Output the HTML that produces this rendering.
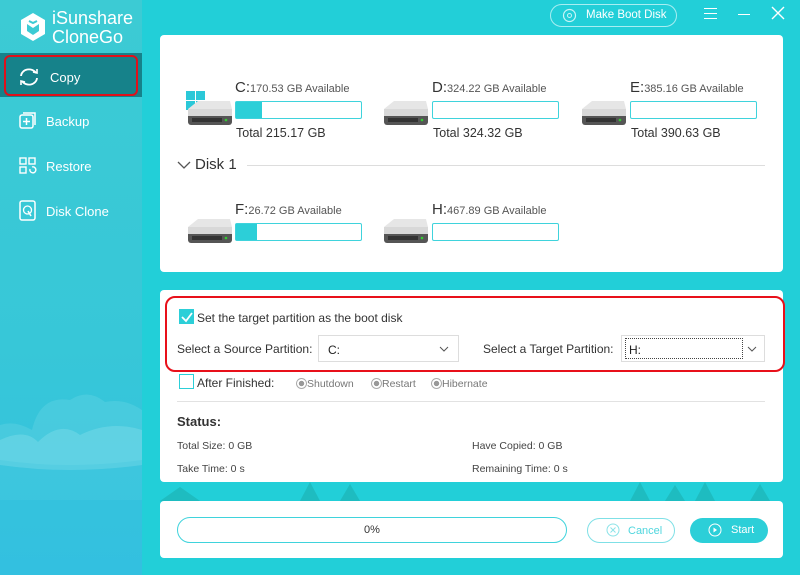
<!DOCTYPE html>
<html><head><meta charset="utf-8"><style>
*{margin:0;padding:0;box-sizing:border-box}
body{width:800px;height:575px;overflow:hidden;font-family:"Liberation Sans",sans-serif;background:#22cfd8;position:relative;color:#222}
.side{position:absolute;left:0;top:0;width:142px;height:575px;background:linear-gradient(#3ccbd4,#37c7d8 60%,#33c0e0)}
.abs{position:absolute}
.nav{position:absolute;left:18px;color:#fff;font-size:13px;display:flex;align-items:center;gap:8px}
.card{position:absolute;background:#fff;border-radius:4px}
.drive{position:absolute;width:46px;height:28px}
.lbl{position:absolute;font-size:11px;color:#555}
.lbl b{font-weight:normal;font-size:15px;color:#333}
.bar{position:absolute;width:127px;height:18px;border:1.5px solid #3fd3dc;border-radius:2px}
.bar i{position:absolute;left:0;top:0;bottom:0;background:#2ccfd8}
.tot{position:absolute;font-size:12.5px;color:#333}
.sm{font-size:10.5px;color:#444;position:absolute}
</style></head><body>
<div class="side">
 <svg class="abs" style="left:20px;top:12px" width="26" height="30" viewBox="0 0 26 30"><path d="M13 1L25 8V22L13 29L1 22V8Z" fill="#fff"/><path d="M7 12L13 16L19 12V19L13 23L7 19Z" fill="#3ccbd4"/><path d="M9 9L13 11L17 9" stroke="#3ccbd4" stroke-width="2" fill="none"/></svg>
 <div class="abs" style="left:52px;top:9px;color:#fff;font-size:18px;line-height:19px">iSunshare<br>CloneGo</div>
 <div class="abs" style="left:0;top:53px;width:142px;height:44px;background:#16828a"></div>
 <div class="abs" style="left:4px;top:55px;width:134px;height:41px;border:2.5px solid #e0101a;border-radius:6px"></div>
 <div class="nav" style="top:67px"><svg width="22" height="20" viewBox="0 0 22 20"><path d="M3 9A8 7 0 0 1 18 6M19 11A8 7 0 0 1 4 14" stroke="#fff" stroke-width="1.8" fill="none"/><path d="M15 5L19 6L19 2" stroke="#fff" stroke-width="1.6" fill="none"/><path d="M7 15L3 14L3 18" stroke="#fff" stroke-width="1.6" fill="none"/></svg><span style="margin-left:2px">Copy</span></div>
 <div class="nav" style="top:111px"><svg width="20" height="20" viewBox="0 0 20 20"><rect x="2" y="4" width="13" height="13" rx="2" stroke="#fff" stroke-width="1.5" fill="none"/><path d="M5 2H17V14M8.5 7V14M5 10.5H12" stroke="#fff" stroke-width="1.5" fill="none"/></svg><span>Backup</span></div>
 <div class="nav" style="top:156px"><svg width="20" height="20" viewBox="0 0 20 20"><rect x="2" y="2" width="6" height="6" stroke="#fff" stroke-width="1.4" fill="none"/><rect x="11" y="2" width="6" height="6" stroke="#fff" stroke-width="1.4" fill="none"/><rect x="2" y="11" width="6" height="6" stroke="#fff" stroke-width="1.4" fill="none"/><path d="M12 13A3 3 0 1 0 14 11" stroke="#fff" stroke-width="1.4" fill="none"/></svg><span>Restore</span></div>
 <div class="nav" style="top:200px"><svg width="20" height="22" viewBox="0 0 20 22"><rect x="2" y="1" width="15" height="19" rx="2" stroke="#fff" stroke-width="1.5" fill="none"/><circle cx="9.5" cy="10" r="4" stroke="#fff" stroke-width="1.3" fill="none"/><path d="M10 11L13 16" stroke="#fff" stroke-width="1.5"/></svg><span>Disk Clone</span></div>
 <svg class="abs" style="left:0;top:390px" width="142" height="110" viewBox="0 0 142 110"><path d="M0 35Q15 30 32 40Q40 5 70 10Q88 -2 105 12Q125 8 142 20V70Q70 80 0 70Z" fill="#6ad8e4" opacity=".35"/><path d="M0 50Q25 38 38 52Q60 30 80 45Q110 30 142 40V75Q70 85 0 75Z" fill="#8ee2ee" opacity=".35"/><rect x="0" y="70" width="142" height="40" fill="#5fd3e4" opacity=".2"/></svg>
</div>
<div class="abs" style="left:550px;top:4px;width:127px;height:23px;border:1.5px solid #a8eef2;border-radius:12px;color:#fff;font-size:11.5px;padding:4px 0 0 35px">Make Boot Disk</div>
<svg class="abs" style="left:562px;top:8px" width="15" height="15"><circle cx="7.5" cy="7.5" r="6" stroke="#c8f4f6" stroke-width="1.2" fill="none"/><circle cx="7.5" cy="7.5" r="2" stroke="#c8f4f6" fill="none"/></svg>
<div class="abs" style="left:704px;top:8px;width:13px;height:11px;border-top:1.3px solid #fff;border-bottom:1.3px solid #fff"></div>
<div class="abs" style="left:704px;top:13px;width:13px;height:1.3px;background:#fff"></div>
<div class="abs" style="left:738px;top:14px;width:12px;height:1.3px;background:#fff"></div>
<svg class="abs" style="left:771px;top:6px" width="14" height="14"><path d="M1 1L13 13M13 1L1 13" stroke="#fff" stroke-width="1.4"/></svg>

<div class="card" style="left:160px;top:35px;width:623px;height:237px"></div>
<svg class="abs" style="left:186px;top:91px" width="20" height="20"><rect x="0" y="0" width="9" height="9" fill="#2bc8d8"/><rect x="10" y="0" width="9" height="9" fill="#2bc8d8"/><rect x="0" y="10" width="9" height="9" fill="#2bc8d8"/><rect x="10" y="10" width="9" height="9" fill="#2bc8d8"/></svg>
<svg width="0" height="0" style="position:absolute"><defs><g id="d"><path d="M2 10L12 2H44L46 10Z" fill="#e6e6e6"/><rect x="2" y="10" width="44" height="16" rx="3" fill="#555"/><rect x="2" y="10" width="44" height="7" fill="#d8d8d8"/><rect x="6" y="19" width="30" height="4" fill="#333"/><circle cx="40" cy="21" r="1.3" fill="#3c3"/></g></defs></svg>
<svg class="drive" style="left:186px;top:99px"><use href="#d"/></svg>
<svg class="drive" style="left:382px;top:99px"><use href="#d"/></svg>
<svg class="drive" style="left:580px;top:99px"><use href="#d"/></svg>
<svg class="drive" style="left:186px;top:217px"><use href="#d"/></svg>
<svg class="drive" style="left:382px;top:217px"><use href="#d"/></svg>

<div class="lbl" style="left:235px;top:79px"><b>C:</b>170.53 GB Available</div>
<div class="bar" style="left:235px;top:101px"><i style="width:26px"></i></div>
<div class="tot" style="left:236px;top:126px">Total 215.17 GB</div>
<div class="lbl" style="left:432px;top:79px"><b>D:</b>324.22 GB Available</div>
<div class="bar" style="left:432px;top:101px"></div>
<div class="tot" style="left:433px;top:126px">Total 324.32 GB</div>
<div class="lbl" style="left:630px;top:79px"><b>E:</b>385.16 GB Available</div>
<div class="bar" style="left:630px;top:101px"></div>
<div class="tot" style="left:631px;top:126px">Total 390.63 GB</div>

<svg class="abs" style="left:177px;top:160px" width="14" height="10"><path d="M1 2L7 8L13 2" stroke="#555" stroke-width="1.3" fill="none"/></svg>
<div class="abs" style="left:195px;top:156px;font-size:15px;color:#333">Disk 1</div>
<div class="abs" style="left:247px;top:165px;width:518px;height:1px;background:#ddd"></div>

<div class="lbl" style="left:235px;top:201px"><b>F:</b>26.72 GB Available</div>
<div class="bar" style="left:235px;top:223px"><i style="width:21px"></i></div>
<div class="lbl" style="left:432px;top:201px"><b>H:</b>467.89 GB Available</div>
<div class="bar" style="left:432px;top:223px"></div>

<div class="card" style="left:160px;top:290px;width:623px;height:192px"></div>
<div class="abs" style="left:165px;top:296px;width:620px;height:76px;border:2.5px solid #e8101a;border-radius:10px"></div>
<div class="abs" style="left:179px;top:309px;width:15px;height:15px;background:#2ccfd8"></div>
<svg class="abs" style="left:180px;top:310px" width="14" height="14"><path d="M2 7L6 11L12 3" stroke="#fff" stroke-width="1.8" fill="none"/></svg>
<div class="abs" style="left:197px;top:311px;font-size:12px;color:#333">Set the target partition as the boot disk</div>
<div class="abs" style="left:177px;top:342px;font-size:12px;color:#333">Select a Source Partition:</div>
<div class="abs" style="left:318px;top:335px;width:141px;height:27px;border:1px solid #ddd;font-size:12px;padding:7px 0 0 9px">C:</div>
<svg class="abs" style="left:439px;top:346px" width="10" height="6"><path d="M1 1L5 5L9 1" stroke="#555" fill="none"/></svg>
<div class="abs" style="left:483px;top:342px;font-size:12px;color:#333">Select a Target Partition:</div>
<div class="abs" style="left:621px;top:335px;width:144px;height:27px;border:1px solid #ddd"></div>
<div class="abs" style="left:625px;top:338px;width:118px;height:21px;border:1px dotted #444;font-size:12px;padding:4px 0 0 3px">H:</div>
<svg class="abs" style="left:747px;top:346px" width="10" height="6"><path d="M1 1L5 5L9 1" stroke="#555" fill="none"/></svg>

<div class="abs" style="left:179px;top:374px;width:15px;height:15px;border:1.3px solid #2ccfd8"></div>
<div class="abs" style="left:197px;top:376px;font-size:12px;color:#333">After Finished:</div>
<div class="sm" style="left:296px;top:378px;color:#777"><span style="display:inline-block;width:11px;height:11px;border-radius:50%;border:1px solid #aaa;background:radial-gradient(#999 40%,#fff 45%);vertical-align:-2px"></span>Shutdown</div>
<div class="sm" style="left:371px;top:378px;color:#777"><span style="display:inline-block;width:11px;height:11px;border-radius:50%;border:1px solid #aaa;background:radial-gradient(#999 40%,#fff 45%);vertical-align:-2px"></span>Restart</div>
<div class="sm" style="left:431px;top:378px;color:#777"><span style="display:inline-block;width:11px;height:11px;border-radius:50%;border:1px solid #aaa;background:radial-gradient(#999 40%,#fff 45%);vertical-align:-2px"></span>Hibernate</div>
<div class="abs" style="left:177px;top:401px;width:588px;height:1px;background:#e2e2e2"></div>
<div class="abs" style="left:177px;top:414px;font-size:13px;font-weight:bold;color:#333">Status:</div>
<div class="sm" style="left:177px;top:440px">Total Size: 0 GB</div>
<div class="sm" style="left:472px;top:440px">Have Copied: 0 GB</div>
<div class="sm" style="left:177px;top:463px">Take Time: 0 s</div>
<div class="sm" style="left:472px;top:463px">Remaining Time: 0 s</div>

<svg class="abs" style="left:160px;top:482px" width="623" height="19"><path d="M0 19L20 5L40 19M140 19L150 0L160 19M180 19L190 2L200 19M470 19L480 0L490 19M505 19L515 3L525 19M535 19L545 0L555 19M590 19L600 2L610 19" fill="#1aa9a8" opacity=".5"/></svg>

<div class="card" style="left:160px;top:501px;width:623px;height:57px"></div>
<div class="abs" style="left:177px;top:517px;width:390px;height:26px;border:1.5px solid #3fd3dc;border-radius:13px;text-align:center;font-size:11px;padding-top:6px;color:#333">0%</div>
<div class="abs" style="left:587px;top:518px;width:88px;height:25px;border:1.2px solid #7fe0e6;border-radius:13px;color:#4fd6de;font-size:11px;padding:6px 0 0 40px">Cancel</div>
<svg class="abs" style="left:606px;top:523px" width="14" height="14"><circle cx="7" cy="7" r="6" stroke="#8ce3e8" fill="none"/><path d="M4.5 4.5L9.5 9.5M9.5 4.5L4.5 9.5" stroke="#8ce3e8"/></svg>
<div class="abs" style="left:690px;top:518px;width:78px;height:25px;background:#2ccfd8;border-radius:13px;color:#fff;font-size:11px;padding:6px 0 0 41px">Start</div>
<svg class="abs" style="left:708px;top:523px" width="14" height="14"><circle cx="7" cy="7" r="6" stroke="#fff" fill="none"/><path d="M5.5 4.5L9 7L5.5 9.5Z" fill="#fff"/></svg>
</body></html>
